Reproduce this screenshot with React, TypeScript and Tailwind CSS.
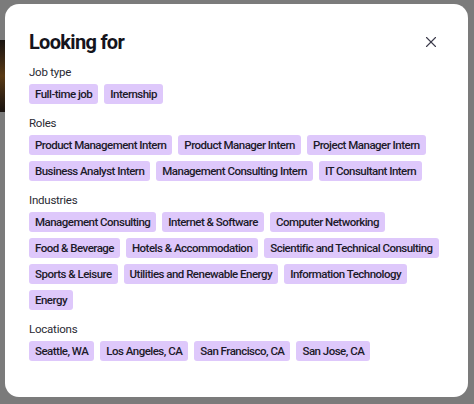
import { X } from 'lucide-react';

const sections: { label: string; items: string[] }[] = [
  { label: 'Job type', items: ['Full-time job', 'Internship'] },
  {
    label: 'Roles',
    items: [
      'Product Management Intern',
      'Product Manager Intern',
      'Project Manager Intern',
      'Business Analyst Intern',
      'Management Consulting Intern',
      'IT Consultant Intern',
    ],
  },
  {
    label: 'Industries',
    items: [
      'Management Consulting',
      'Internet & Software',
      'Computer Networking',
      'Food & Beverage',
      'Hotels & Accommodation',
      'Scientific and Technical Consulting',
      'Sports & Leisure',
      'Utilities and Renewable Energy',
      'Information Technology',
      'Energy',
    ],
  },
  { label: 'Locations', items: ['Seattle, WA', 'Los Angeles, CA', 'San Francisco, CA', 'San Jose, CA'] },
];

export default function App() {
  return (
    <div
      className="relative w-[474px] h-[404px] bg-[#7b7b7b] overflow-hidden pt-[4px] pl-[5px]"
      style={{ fontFamily: 'Roboto, "Noto Sans", sans-serif' }}
    >
      {/* bit of the page behind the dialog */}
      <div className="absolute left-0 top-[40px] w-[6px] h-[72px] bg-gradient-to-b from-[#1a1410] via-[#5a3a14] to-[#1a1410]" />

      <div className="relative w-[463px] h-[393px] bg-white rounded-[14px] px-6 pt-[23px]">
        <div className="flex items-center justify-between">
          <h1 className="text-[20px] leading-[30px] font-bold text-[#15141c] tracking-[-0.035em]">Looking for</h1>
          <button className="w-[18px] h-[18px] mr-[4px] flex items-center justify-center text-[#3b3a4a]">
            <X className="w-[18px] h-[18px]" strokeWidth={1.5} />
          </button>
        </div>

        <div className="mt-[7px] flex flex-col gap-[11px]">
          {sections.map((section) => (
            <div key={section.label}>
              <div className="text-[11.5px] leading-[16px] text-[#2a2a33] tracking-[-0.02em]">{section.label}</div>
              <div className="mt-[4px] flex flex-wrap gap-x-[6px] gap-y-[6px]">
                {section.items.map((item) => (
                  <span
                    key={item}
                    className="h-[20px] px-[6px] rounded-[3px] bg-[#dec8fb] text-[11.5px] leading-[20px] font-medium text-[#1c1a2a] tracking-[-0.045em] whitespace-nowrap"
                  >
                    {item}
                  </span>
                ))}
              </div>
            </div>
          ))}
        </div>
      </div>
    </div>
  );
}
